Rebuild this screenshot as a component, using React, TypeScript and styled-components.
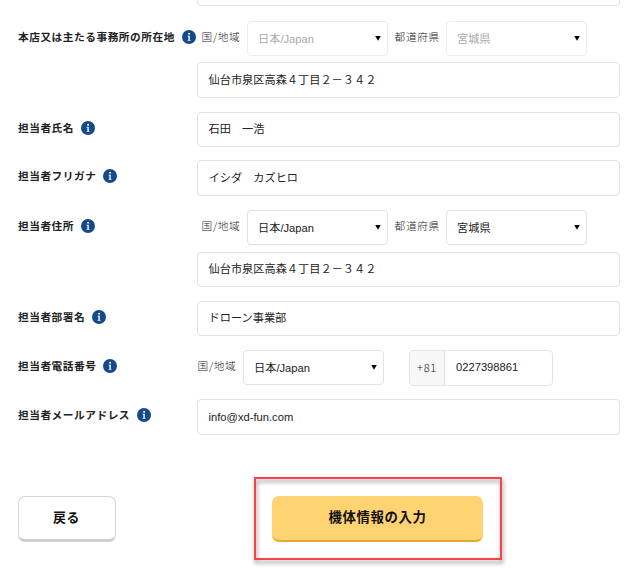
import React from "react";
import styled, { createGlobalStyle } from "styled-components";

const GlobalStyle = createGlobalStyle`
  * { box-sizing: border-box; }
  html, body { margin: 0; background: #fff; overflow: hidden; }
  body {
    font-family: "Noto Sans CJK JP", "Noto Sans", sans-serif;
    color: #222;
  }
`;

const Page = styled.main`
  width: 640px;
  height: 579px;
  overflow: hidden;
  display: flex;
  flex-direction: column;
  padding-left: 18px;
`;

const Row = styled.div<{ $height: number; $gap: number }>`
  display: grid;
  grid-template-columns: 179px 423px;
  flex: none;
  height: ${(p) => p.$height}px;
  margin-bottom: ${(p) => p.$gap}px;
`;

const LabelCell = styled.div`
  display: flex;
  align-items: center;
  height: 32px;
  gap: 7px;
  white-space: nowrap;
`;

const LabelText = styled.span`
  font-size: 10.7px;
  line-height: 16px;
  font-weight: 700;
  letter-spacing: 0.52px;
`;

const InfoSvg = styled.svg`
  flex: none;
  width: 14px;
  height: 14px;
`;

const Field = styled.div`
  grid-column: 2;
  display: flex;
  align-items: center;
  height: 100%;
  padding: 0 0 1px 10.5px;
  border: 1px solid #e2e2e2;
  border-radius: 4px;
  font: 11.2px/16px "Liberation Sans", "Noto Sans CJK JP", sans-serif;
  white-space: pre;
`;

const FieldTail = styled.div`
  grid-column: 2;
  height: 6px;
  border: 1px solid #e2e2e2;
  border-top: 0;
  border-radius: 0 0 4px 4px;
`;

const Group = styled.div<{ $indent?: number }>`
  grid-column: 2;
  display: flex;
  padding-left: ${(p) => p.$indent ?? 0}px;
`;

const SideLabel = styled.span<{ $width: number }>`
  width: ${(p) => p.$width}px;
  flex: none;
  height: 32px;
  padding-left: 0.6px;
  font-size: 10.7px;
  line-height: 31px;
  font-weight: 300;
  letter-spacing: 0.6px;
  color: #222;
  white-space: nowrap;
`;

const SelectBox = styled.div<{ $disabled?: boolean }>`
  display: flex;
  align-items: center;
  justify-content: space-between;
  flex: none;
  width: 141px;
  height: 35px;
  margin-right: 6px;
  padding: 0 6px 0 10px;
  border: 1px solid ${(p) => (p.$disabled ? "#ececec" : "#e2e2e2")};
  border-radius: 4px;
  color: ${(p) => (p.$disabled ? "#aaa" : "#222")};
  font: 11.2px/16px "Liberation Sans", "Noto Sans CJK JP", sans-serif;
`;

const Arrow = styled.svg`
  width: 6px;
  height: 5px;
`;

const PhoneGroup = styled.div`
  display: flex;
  width: 144px;
  height: 36px;
  margin-left: 19px;
  border: 1px solid #e2e2e2;
  border-radius: 4px;
  overflow: hidden;
`;

const Prefix = styled.span`
  width: 35px;
  background: #f7f7f7;
  border-right: 1px solid #e2e2e2;
  font-size: 11.2px;
  font-weight: 300;
  letter-spacing: 0.6px;
  line-height: 32px;
  text-align: center;
`;

const PhoneNumber = styled.span`
  padding-left: 11px;
  font: 11.2px/33px "Liberation Sans", sans-serif;
`;

const Actions = styled.div`
  display: flex;
  height: 46px;
  margin-top: 61px;
  flex: none;
`;

const BackButton = styled.button`
  width: 98px;
  height: 46px;
  padding: 0 1px 3px 0;
  border: 1px solid #d6d6d6;
  border-bottom: 3px solid #cfcfcf;
  border-radius: 7px;
  background: #fff;
  color: #111;
  font: 700 12.9px/20px "Noto Sans CJK JP", sans-serif;
  letter-spacing: 0.5px;
`;

const NextWrap = styled.div`
  position: relative;
  margin-left: 156px;
`;

const NextButton = styled.button`
  width: 211px;
  height: 46px;
  padding: 0 0 4px;
  border: 0;
  border-bottom: 2px solid #e3ab2e;
  border-radius: 7px;
  background: #ffd272;
  color: #111;
  font: 700 13.4px/20px "Noto Sans CJK JP", sans-serif;
  letter-spacing: 0.6px;
`;

const Highlight = styled.div`
  position: absolute;
  inset: -19px -19px -18px -18px;
  border: 2px solid #f9434b;
  filter: drop-shadow(1px 3px 2px rgba(0, 0, 0, 0.45));
  pointer-events: none;
`;

function InfoIcon() {
  return (
    <InfoSvg viewBox="0 0 14 14">
      <circle cx="7" cy="7" r="7" fill="#14498c" />
      <circle cx="7.1" cy="3.8" r="1" fill="#fff" />
      <path d="M5.7 5.8h2.1v4.1h.7v.9H5.6v-.9h.8V6.7h-.7z" fill="#fff" />
    </InfoSvg>
  );
}

function Label({ children }: { children: string }) {
  return (
    <LabelCell>
      <LabelText>{children}</LabelText>
      <InfoIcon />
    </LabelCell>
  );
}

function Select({ value, disabled }: { value: string; disabled?: boolean }) {
  return (
    <SelectBox $disabled={disabled}>
      <span>{value}</span>
      <Arrow viewBox="0 0 6 5">
        <path d="M.2 0h5.6L3 4.8z" fill="#000" />
      </Arrow>
    </SelectBox>
  );
}

function Region({ disabled }: { disabled?: boolean }) {
  return (
    <Group $indent={4}>
      <SideLabel $width={46}>国/地域</SideLabel>
      <Select value="日本/Japan" disabled={disabled} />
      <SideLabel $width={52}>都道府県</SideLabel>
      <Select value="宮城県" disabled={disabled} />
    </Group>
  );
}

const ADDRESS = "仙台市泉区高森４丁目２－３４２";

export default function App() {
  return (
    <>
      <GlobalStyle />
      <Page>
        <Row $height={6} $gap={15}>
          <FieldTail />
        </Row>
        <Row $height={35} $gap={6}>
          <Label>本店又は主たる事務所の所在地</Label>
          <Region disabled />
        </Row>
        <Row $height={36} $gap={14}>
          <Field>{ADDRESS}</Field>
        </Row>
        <Row $height={35} $gap={13}>
          <Label>担当者氏名</Label>
          <Field>石田　一浩</Field>
        </Row>
        <Row $height={36} $gap={14}>
          <Label>担当者フリガナ</Label>
          <Field>イシダ　カズヒロ</Field>
        </Row>
        <Row $height={35} $gap={7}>
          <Label>担当者住所</Label>
          <Region />
        </Row>
        <Row $height={35} $gap={14}>
          <Field>{ADDRESS}</Field>
        </Row>
        <Row $height={35} $gap={14}>
          <Label>担当者部署名</Label>
          <Field>ドローン事業部</Field>
        </Row>
        <Row $height={35} $gap={14}>
          <Label>担当者電話番号</Label>
          <Group>
            <SideLabel $width={46}>国/地域</SideLabel>
            <Select value="日本/Japan" />
            <PhoneGroup>
              <Prefix>+81</Prefix>
              <PhoneNumber>0227398861</PhoneNumber>
            </PhoneGroup>
          </Group>
        </Row>
        <Row $height={36} $gap={0}>
          <Label>担当者メールアドレス</Label>
          <Field>info@xd-fun.com</Field>
        </Row>
        <Actions>
          <BackButton>戻る</BackButton>
          <NextWrap>
            <NextButton>機体情報の入力</NextButton>
            <Highlight />
          </NextWrap>
        </Actions>
      </Page>
    </>
  );
}
